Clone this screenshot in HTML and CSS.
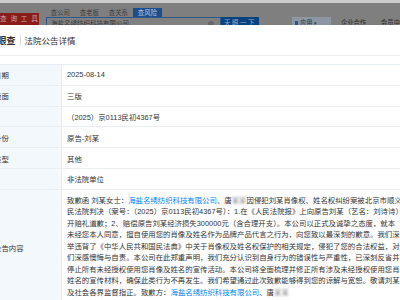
FILE: index.html
```html
<!DOCTYPE html>
<html lang="zh">
<head>
<meta charset="utf-8">
<title>法院公告详情</title>
<link rel="stylesheet" href="styles.css">
</head>
<body>
<div class="page">
  <div class="topbar">
    <div class="logo">查 询 工 具</div>
    <div class="search">
      <div class="tabs">
        <span class="tab">查公司</span>
        <span class="tab">查老板</span>
        <span class="tab">查关系</span>
        <span class="tab on">查风险</span>
      </div>
      <div class="searchrow">
        <div class="input"><span class="q">海盐名绣纺织科技有限公司</span><i class="clear"></i></div>
        <div class="btn">天眼一下</div>
      </div>
    </div>
    <div class="nav">
      <div class="apps"><i class="appicon"></i>应用 <span class="caret">▾</span></div>
      <span class="navlink">企业合作</span>
      <span class="navlink vip">会员中心</span>
    </div>
  </div>

  <div class="modal">
    <div class="mhead">
      <span class="brand">天眼查</span>
      <span class="sep"></span>
      <span class="title">法院公告详情</span>
    </div>
    <div class="mbody">
      <div class="table">
        <div class="row"><div class="lab">日期</div><div class="val">2025-08-14</div></div>
        <div class="row"><div class="lab">版面</div><div class="val">三版</div></div>
        <div class="row"><div class="lab"></div><div class="val">（2025）京0113民初4367号</div></div>
        <div class="row"><div class="lab">身份</div><div class="val">原告-刘某</div></div>
        <div class="row"><div class="lab">类型</div><div class="val">其他</div></div>
        <div class="row"><div class="lab"></div><div class="val">非法院单位</div></div>
        <div class="row big"><div class="lab">公告内容</div><div class="val text">致歉函 刘某女士：<a class="link">海盐名绣纺织科技有限公司</a>、唐<span class="blur">某某</span>因侵犯刘某肖像权、姓名权纠纷案被北京市顺义区人<br>民法院判决（案号：（2025）京0113民初4367号）：1.在《人民法院报》上向原告刘某（艺名：刘诗诗）公<br>开赔礼道歉；2、赔偿原告刘某经济损失300000元（含合理开支）。本公司以正式及诚挚之态度，就本<br>未经您本人同意，擅自使用您的肖像及姓名作为品牌产品代言之行为，向您致以最深刻的歉意。我们深<br>举违背了《中华人民共和国民法典》中关于肖像权及姓名权保护的相关规定，侵犯了您的合法权益，对<br>们深感懊悔与自责。本公司在此郑重声明，我们充分认识到自身行为的错误性与严重性，已深刻反省并<br>停止所有未经授权使用您肖像及姓名的宣传活动。本公司将全面梳理并修正所有涉及未经授权使用您肖<br>姓名的宣传材料，确保此类行为不再发生。我们希望通过此次致歉能够得到您的谅解与宽恕。敬请刘某<br>及社会各界监督指正。致歉方：<a class="link">海盐名绣纺织科技有限公司</a>、唐<span class="blur">某某</span></div></div>
      </div>
    </div>
  </div>
</div>
</body>
</html>
```

FILE: styles.css
```css
html, body {
  margin: 0;
  padding: 0;
}
body {
  width: 400px;
  height: 300px;
  overflow: hidden;
  background: #7f7f7f;
  font-family: "Liberation Sans", "Noto Sans CJK SC", sans-serif;
}
.page {
  width: 400px;
  height: 300px;
  overflow: hidden;
}

/* dimmed page behind the dialog */
.topbar {
  height: 25px;
  box-sizing: border-box;
  border-top: 3px solid #cbcbcb;
  background: #7f7f7f;
  display: flex;
  align-items: flex-start;
  overflow: hidden;
}
.logo {
  margin-top: 10px;
  width: 41px;
  height: 14px;
  background: #8a1c1c;
  color: #c9a4a4;
  font-size: 6.6px;
  line-height: 11px;
  text-align: center;
  white-space: nowrap;
  letter-spacing: 1px;
}
.search {
  margin-left: 7px;
  display: flex;
  flex-direction: column;
}
.tabs {
  margin-top: 5px;
  display: flex;
  height: 9px;
}
.tab {
  width: 29px;
  text-align: center;
  font-size: 6.4px;
  line-height: 9px;
  color: #3e3e3e;
}
.tab.on {
  background: #1c4e8e;
  color: #b9c4d3;
}
.searchrow {
  display: flex;
  height: 14px;
}
.input {
  width: 175px;
  box-sizing: border-box;
  border: 1px solid #2f5688;
  background: #808080;
  display: flex;
  align-items: flex-start;
  padding-left: 4px;
}
.q {
  font-size: 6.5px;
  line-height: 12px;
  color: #3a3a3a;
  flex: 1;
  white-space: nowrap;
}
.clear {
  width: 6px;
  height: 6px;
  border-radius: 50%;
  background: #666;
  margin: 3px 6px 0 0;
}
.btn {
  width: 38px;
  background: #0a4280;
  color: #93a8c4;
  font-size: 6.5px;
  line-height: 12px;
  text-align: center;
  letter-spacing: 1.5px;
  white-space: nowrap;
}
.nav {
  margin-left: 33px;
  margin-top: 14px;
  display: flex;
  align-items: flex-start;
  white-space: nowrap;
}
.apps {
  width: 39px;
  height: 10px;
  box-sizing: border-box;
  background: #8d97a3;
  color: #22334a;
  font-size: 6.3px;
  line-height: 12px;
  padding-left: 3px;
  display: flex;
  align-items: flex-start;
}
.appicon {
  width: 3px;
  height: 4px;
  background: #1e56a8;
  margin: 4px 2px 0 0;
}
.caret {
  font-size: 5px;
  margin-left: 2px;
}
.navlink {
  margin-left: 10px;
  font-size: 6.3px;
  line-height: 12px;
  color: #2c2c2c;
}
.navlink.vip {
  margin-left: 15px;
}

/* dialog */
.modal {
  margin-left: -20px;
  width: 460px;
  background: #ffffff;
  height: 275px;
}
.mhead {
  height: 30px;
  border-bottom: 1px solid #efefef;
  display: flex;
  align-items: center;
  padding-left: 8px;
}
.brand {
  font-size: 9.2px;
  font-weight: bold;
  color: #333;
  white-space: nowrap;
}
.sep {
  width: 1px;
  height: 10px;
  background: #dcdcdc;
  margin: 0 4px 0 4px;
}
.title {
  font-size: 8.5px;
  color: #333;
  white-space: nowrap;
}
.mbody {
  padding: 8px 8px 0 8px;
}
.table {
  border-top: 1px solid #e8eef5;
  border-left: 1px solid #e8eef5;
}
.row {
  display: grid;
  grid-template-columns: 73px 1fr;
  height: 20.8px;
  box-sizing: border-box;
  border-bottom: 1px solid #ebeff3;
}
.row.big {
  height: auto;
}
.lab {
  background: #f3f8fd;
  border-right: 1px solid #e8eef5;
  padding-left: 5px;
  display: flex;
  align-items: center;
  font-size: 7.4px;
  color: #333;
  white-space: nowrap;
}
.val {
  padding-left: 5px;
  display: flex;
  align-items: center;
  font-size: 7.4px;
  color: #333;
  white-space: nowrap;
}
.val.text {
  display: block;
  padding-top: 4.75px;
  padding-bottom: 6.75px;
  line-height: 11.5px;
}
.link {
  color: #0084ff;
  text-decoration: none;
}
.blur {
  color: #888;
  filter: blur(1.2px);
}
```
